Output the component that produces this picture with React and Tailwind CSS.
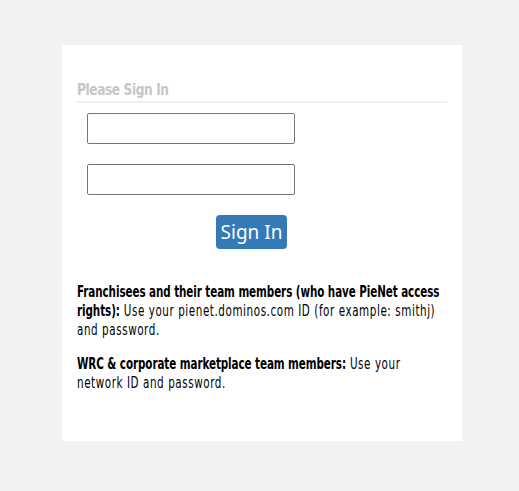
import React from "react";

const App = () => {
    return (
        <div className="min-h-[491px] w-full bg-[#f2f2f2] pt-[45px] pb-[50px]">
            <div className="ml-[62px] w-[400px] h-[396px] bg-white px-[15px] pt-[35px] overflow-hidden">
                <h2 className="text-[16px] leading-[20px] font-bold text-[#c6c6c6] border-b-2 border-[#f0f0f0] pb-[1px] font-stretch-condensed [font-family:'DejaVu_Sans_Condensed','DejaVu_Sans',sans-serif]">
                    <span className="inline-block origin-left scale-x-[0.85] tracking-[-0.5px]">Please Sign In</span>
                </h2>
                <form className="flex flex-col pl-[10px] pt-[10px]" onSubmit={(e) => e.preventDefault()}>
                    <input
                        type="text"
                        className="w-[208px] h-[31px] border border-[#767676] rounded-[2px] px-2 outline-none"
                    />
                    <input
                        type="password"
                        className="w-[208px] h-[31px] border border-[#767676] rounded-[2px] px-2 mt-[20px] outline-none"
                    />
                    <div className="flex pl-[129px] pt-[20px]">
                        <button className="w-[71px] h-[34px] bg-[#337ab7] text-white rounded-[4px] text-[19px] leading-none [font-family:'Noto_Sans',sans-serif]">
                            Sign In
                        </button>
                    </div>
                </form>
                <div className="mt-[33px] w-[514px] origin-top-left scale-x-[0.72] text-[16px] leading-[19px] text-black tracking-[0.8px] font-stretch-condensed [font-family:'DejaVu_Sans_Condensed','DejaVu_Sans',sans-serif]">
                    <p>
                        <b className="tracking-[-0.1px]">Franchisees and their team members (who have PieNet access rights):</b> Use your pienet.dominos.com ID (for example: smithj) and password.
                    </p>
                    <p className="mt-[15px]">
                        <b className="tracking-[-0.1px]">WRC &amp; corporate marketplace team members:</b> Use your network ID and password.
                    </p>
                </div>
            </div>
        </div>
    );
};

export default App;
